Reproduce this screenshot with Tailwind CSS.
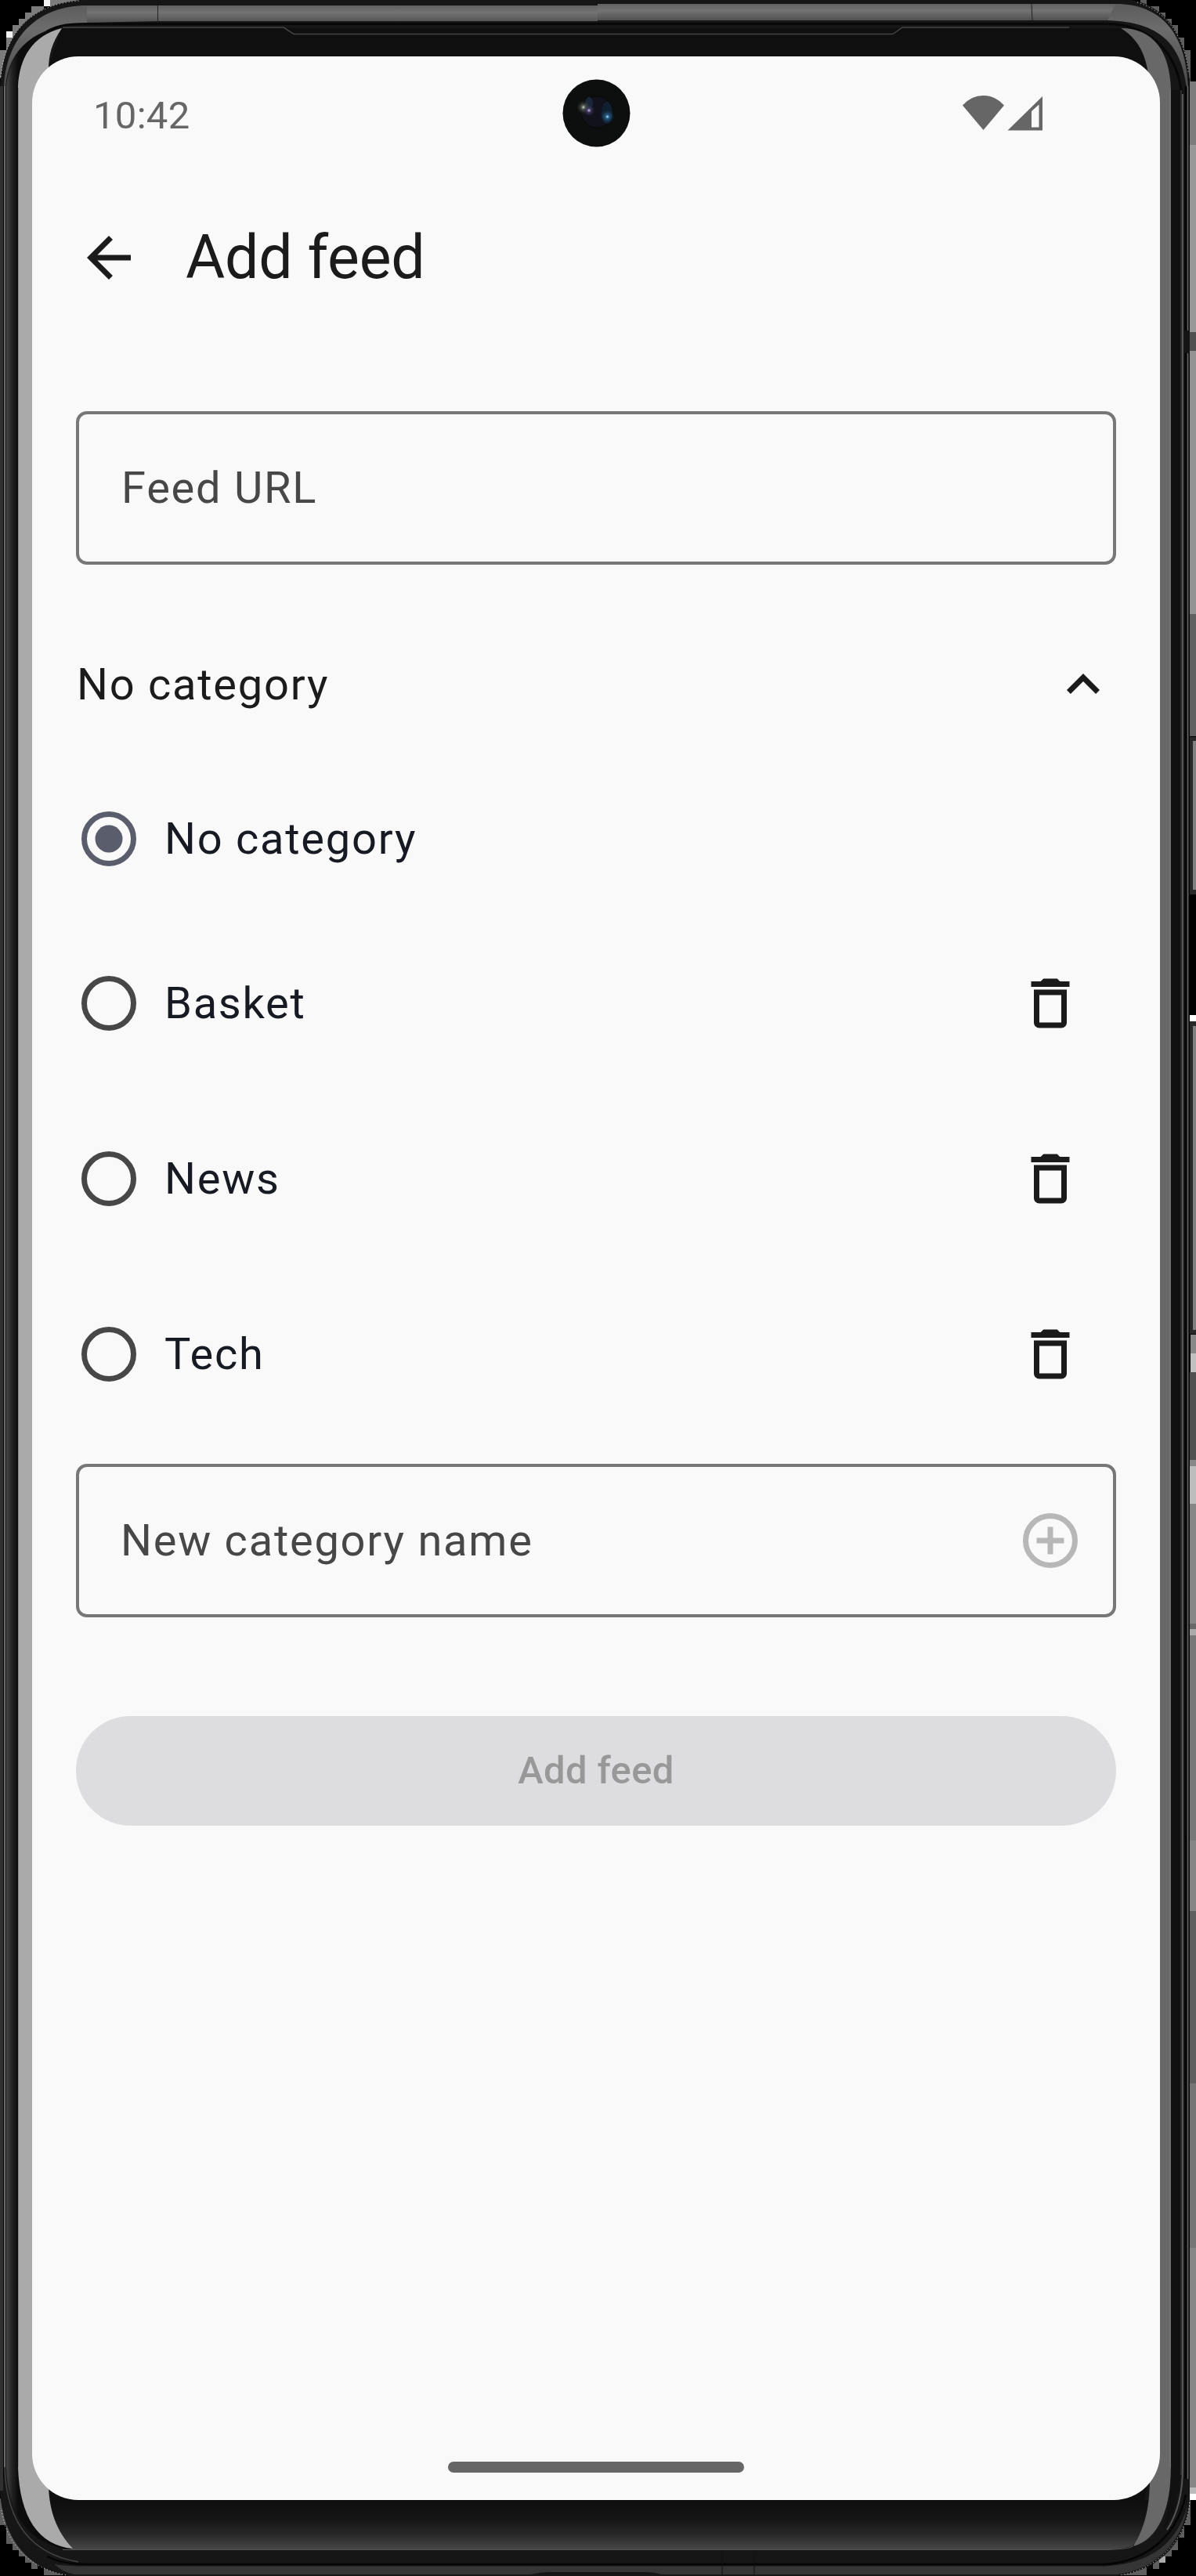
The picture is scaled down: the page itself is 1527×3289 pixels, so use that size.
<!DOCTYPE html>
<html lang="en">
<head>
<meta charset="utf-8">
<title>Add feed</title>
<script src="https://cdn.jsdelivr.net/npm/@tailwindcss/browser@4"></script>
</head>
<body class="bg-black">
<div class="relative w-[1527px] h-[3289px] overflow-hidden bg-black pt-[72px] pl-[41px] font-[Roboto,sans-serif]">

  <!-- Device frame -->
  <svg class="absolute inset-0" width="1527" height="3289" viewBox="0 0 1527 3289" fill="none">
    <defs>
      <linearGradient id="rim" x1="0" y1="0" x2="0" y2="1"><stop offset="0" stop-color="#606060"/><stop offset=".4" stop-color="#737373"/><stop offset="1" stop-color="#505050"/></linearGradient>
      <linearGradient id="corner" gradientUnits="userSpaceOnUse" x1="0" y1="5" x2="0" y2="110"><stop offset="0" stop-color="#5c5c5c"/><stop offset=".3" stop-color="#6c6c6c"/><stop offset="1" stop-color="#4a4a4a"/></linearGradient>
      <linearGradient id="left" gradientUnits="userSpaceOnUse" x1="7" y1="0" x2="23" y2="0"><stop offset="0" stop-color="#4c4c4c"/><stop offset=".5" stop-color="#242424"/><stop offset="1" stop-color="#0c0c0c"/></linearGradient>
      <linearGradient id="chin" x1="0" y1="0" x2="0" y2="1"><stop offset="0" stop-color="#0e0e0e"/><stop offset=".4" stop-color="#161616"/><stop offset=".7" stop-color="#292929"/><stop offset="1" stop-color="#484848"/></linearGradient>
      <linearGradient id="button" x1="0" y1="0" x2="1" y2="0"><stop offset="0" stop-color="#2a2a2a"/><stop offset=".45" stop-color="#282828"/><stop offset=".7" stop-color="#888"/><stop offset="1" stop-color="#505050"/></linearGradient>
    </defs>
    <!-- stepped shadow outside the corners -->
    <g fill="#7c7c7c" shape-rendering="crispEdges">
      <path d="M0 64h8v36H0zM8 48h8v24H8zM16 32h8v24h-8zM24 24h8v16h-8zM32 16h8v16h-8zM40 8h16v16H40zM56 0h44v8H56z"/>
      <path d="M8 40h8v8H8zM56 0h8v8h-8z" fill="#f2f2f2"/>
      <path d="M1456 0h8v8h-8zM1464 8h16v16h-16zM1480 16h8v16h-8zM1488 24h8v16h-8zM1496 32h8v16h-8zM1504 48h8v24h-8zM1512 64h8v45h-8z" fill="#5e5e5e"/>
      <path d="M0 3190h8v34H0zM8 3224h8v24H8zM16 3240h8v16h-8zM24 3248h8v16h-8zM32 3256h8v16h-8zM40 3264h8v16h-8zM56 3272h24v16H56z" fill="#5e5e5e"/>
      <path d="M1512 3192h8v32h-8zM1504 3216h8v24h-8zM1496 3232h8v24h-8zM1480 3248h16v16h-16zM1472 3264h8v16h-8zM1448 3272h16v16h-16zM1432 3280h16v8h-16z" fill="#5e5e5e"/>
      <path d="M1480 3264h8v8h-8z" fill="#aaa"/>
    </g>
    <!-- strip beside the phone -->
    <g shape-rendering="crispEdges">
      <path d="M1519 104h8v81h-8z" fill="#7c7c7c"/><path d="M1519 185h8v239h-8z" fill="#989898"/>
      <path d="M1519 424h8v24h-8z" fill="#505050"/><path d="M1519 448h8v336h-8z" fill="#939393"/>
      <path d="M1519 784h8v156h-8z" fill="#606060"/>
      <path d="M1519 941h8v201h-8zM1519 1304h8v399h-8z" fill="#282828"/>
      <path d="M1523 946h4v190h-4zM1523 1310h4v388h-4z" fill="#808080"/>
      <path d="M1519 1296h8v8h-8z" fill="#fff"/><path d="M1520 1704h7v24h-7z" fill="#888"/>
      <path d="M1520 1728h7v24h-7z" fill="#c0c0c0"/><path d="M1519 1752h8v112h-8z" fill="#505050"/>
      <path d="M1519 1864h8v8h-8z" fill="#888"/><path d="M1519 1872h8v48h-8z" fill="#bdbdbd"/>
      <path d="M1519 1920h8v153h-8z" fill="#868686"/><path d="M1519 2073h8v7h-8z" fill="#686868"/>
      <path d="M1519 2080h8v8h-8z" fill="#aaa"/><path d="M1519 2088h8v262h-8z" fill="#787878"/>
      <path d="M1519 2350h8v90h-8z" fill="#858585"/><path d="M1519 2440h8v220h-8z" fill="#5f5f5f"/>
      <path d="M1519 2660h8v210h-8z" fill="#757575"/><path d="M1519 2870h8v306h-8z" fill="#868686"/>
      <path d="M1519 3176h8v8h-8z" fill="#bbb"/><path d="M1519 3184h8v8h-8z" fill="#fff"/>
    </g>
    <!-- body -->
    <path d="M0 110C4 45 35 5 105 0H1445C1490 8 1518 50 1519 110V3190C1517 3240 1485 3282 1425 3289H90C40 3283 3 3245 0 3180Z" fill="#161616"/>
    <path d="M1 98C6 45 38 5 102 1M1452 3C1490 14 1514 50 1517 92M2 3205C8 3250 40 3280 85 3288M1519 3195C1515 3240 1480 3280 1430 3288" stroke="#ddd" stroke-width="1" stroke-dasharray="1 3"/>
    <path d="M110 7H763V27H201L110 29Z" fill="url(#rim)"/>
    <path d="M763 5H1425V26H763Z" fill="url(#rim)"/>
    <path d="M111 7C50 7 9 45 5 110V3150H7V112C10 62 45 32 111 29Z" fill="url(#corner)"/>
    <path d="M1424 5C1485 5 1514 45 1517 110L1515 112C1508 55 1480 28 1414 26Z" fill="url(#corner)"/>
    <path d="M201.500 7V29M1317 5L1318 26" stroke="#222"/>
    <path d="M60 40C75 32 90 30.500 110 30.500H1415C1460 31 1505 60 1509 125" stroke="#080808" stroke-width="3"/>
    <path d="M0 110H4V3180H0Z" fill="#303030"/>
    <path d="M4.500 110V3165" stroke="#050505"/>
    <path d="M6 110V3150" stroke="#777" stroke-width="1.500"/>
    <path d="M6 3150C8 3215 35 3260 100 3271" stroke="#444" stroke-width="1.500"/>
    <path d="M8 112C11 70 35 43 75 36L60 60 23 120V3150C27 3205 45 3242 90 3255C40 3250 10 3215 8 3150Z" fill="url(#left)"/>
    <path d="M79 36H1431C1465 45 1470 70 1468 110V3160L1447 3253H93L60 3190V90Z" fill="#0f0f0f"/>
    <path d="M80 35H362L375 43.500H1140L1152 35H1365" stroke="#444" stroke-width="1.500"/>
    <path d="M60 3192H1470C1467 3225 1460 3240 1445 3251Q1430 3255 1405 3256H93C72 3240 62 3215 60 3192Z" fill="url(#chin)"/>
    <path d="M80 3255.500H1410C1430 3255 1440 3254 1447 3251" stroke="#555"/>
    <path d="M60 3264C80 3274 100 3274 115 3274H1410C1450 3272 1500 3250 1514 3185" stroke="#050505" stroke-width="2.500"/>
    <path d="M70 3274C80 3276 100 3276.500 110 3276.500H1410C1460 3274 1500 3255 1516 3200C1510 3245 1475 3282 1425 3287H95C85 3285 75 3280 70 3274Z" fill="#353535"/>
    <path d="M678 3287Q690 3284 705 3284H825Q835 3284 845 3287Z" fill="#141414"/>
    <path d="M922 3260V3288M963 3260V3288" stroke="#101010"/>
    <path d="M23 110C25 75 40 46 79 36C66 55 62 70 62 90V3175C63 3205 72 3232 93 3254C50 3250 25 3215 23 3150Z" fill="#aaa"/>
    <path d="M23.500 112V3150" stroke="#8a8a8a"/>
    <path d="M1431 36C1472 36 1494 65 1495 115V3150C1495 3205 1478 3243 1447 3251C1460 3230 1468 3205 1468 3165V110C1465 75 1457 52 1431 36Z" fill="#686868"/>
    <path d="M1494 115V3150" stroke="#777"/>
    <path d="M1495 115H1508V3150C1506 3190 1498 3215 1485 3230Q1495 3200 1495 3150Z" fill="#111"/>
    <path d="M1508 115V3160" stroke="#2c2c2c" stroke-width="2"/><path d="M1510 120V3150C1510 3190 1500 3215 1490 3230" stroke="#565656" stroke-width="2"/>
    <path d="M1514 110V3165" stroke="#060606" stroke-width="3"/><path d="M1516.500 110V3165" stroke="#666" stroke-width="1.500"/><path d="M1518.500 100V3165" stroke="#050505"/>
    <path d="M1512 422H1519V451H1512Z" fill="#141414"/>
  </svg>

  <!-- Screen -->
  <main class="relative flex h-[3120px] w-[1440px] flex-col rounded-[59px] bg-[#f9f9f9]">
    <header class="flex h-[150px] items-center pr-[149px] pl-[78px] text-[#666]">
      <span class="flex-1 text-[49px] leading-none tracking-[0.3px]">10:42</span>
      <svg class="mt-[-6px]" width="104" height="46" viewBox="1228 121 104 46" fill="currentColor">
        <path d="M1229 134.500Q1240 122 1255.500 122T1282 134.500L1255.500 166Z"/>
        <path fill-rule="evenodd" d="M1286.500 166.500L1331 123V166.500ZM1317 142V162.500H1326.500V133.500Z"/>
      </svg>
    </header>
    <!-- Front camera -->
    <svg class="absolute top-[29px] left-[677px]" width="87" height="87" viewBox="0 0 87 87">
      <defs>
        <radialGradient id="g1"><stop offset="0" stop-color="#dfe8dc"/><stop offset=".3" stop-color="#6d756b" stop-opacity=".7"/><stop offset="1" stop-color="#27301f" stop-opacity="0"/></radialGradient>
        <radialGradient id="g2"><stop offset="0" stop-color="#d5f0ff"/><stop offset=".25" stop-color="#2c6f9f" stop-opacity=".8"/><stop offset="1" stop-color="#123450" stop-opacity="0"/></radialGradient>
        <radialGradient id="g3"><stop offset="0" stop-color="#d8cdf5"/><stop offset=".3" stop-color="#4e4670" stop-opacity=".8"/><stop offset="1" stop-color="#1c1a30" stop-opacity="0"/></radialGradient>
      </defs>
      <circle cx="43.500" cy="43.500" r="43" fill="#0d0f0f"/>
      <circle cx="44" cy="42" r="20" fill="#12121c" stroke="#080808"/>
      <ellipse cx="57" cy="43" rx="7" ry="14" fill="#10263b" opacity=".7"/>
      <ellipse cx="34" cy="31" rx="5" ry="8" fill="#23364f" opacity=".6"/>
      <circle cx="27" cy="36" r="9" fill="url(#g1)"/>
      <circle cx="34" cy="40" r="8" fill="url(#g3)"/>
      <circle cx="57.500" cy="48" r="9" fill="url(#g2)"/>
    </svg>

    <div class="flex h-[224px] items-center pl-14 text-[#1b1b1b] mt-[-5px]">
      <svg width="84" height="84" viewBox="0 0 24 24" fill="currentColor"><path d="M20 11H7.830l5.590-5.590L12 4l-8 8 8 8 1.410-1.410L7.830 13H20v-2z"/></svg>
      <h1 class="ml-14 text-[77px] leading-none tracking-[-0.2px]">Add feed</h1>
    </div>

    <form class="mt-[84px] flex flex-col px-14 text-[56px] leading-none tracking-[1.75px]">
      <div class="flex h-[196px] items-center rounded-[14px] border-4 border-[#777] px-[54px] text-[#474747]">Feed URL</div>

      <div class="mt-[69px] flex h-[168px] items-center justify-between pl-px text-[#1b1b1b]">
        <span>No category</span>
        <svg width="84" height="84" viewBox="0 0 24 24" fill="currentColor"><path d="M12 8l-6 6 1.410 1.410L12 10.830l4.590 4.580L18 14z"/></svg>
      </div>

      <div class="mt-[15px] flex h-[196px] items-center gap-[29px] text-[#181a23]">
        <svg width="84" height="84" viewBox="0 0 24 24" class="text-[#5a5d6b]"><circle cx="12" cy="12" r="9" fill="none" stroke="currentColor" stroke-width="2"/><circle cx="12" cy="12" r="5" fill="currentColor"/></svg>
        <span>No category</span>
      </div>
      <div class="flex h-[224px] items-center gap-[29px] pr-[42px] text-[#181a23]">
        <svg width="84" height="84" viewBox="0 0 24 24" class="text-[#474747]"><circle cx="12" cy="12" r="9" fill="none" stroke="currentColor" stroke-width="2"/></svg>
        <span class="flex-1">Basket</span>
        <svg width="84" height="84" viewBox="0 0 24 24" class="text-[#1b1b1b]" fill="currentColor"><path d="M16 9v10H8V9h8m-1.500-6h-5l-1 1H5v2h14V4h-3.500l-1-1zM18 7H6v12c0 1.100.9 2 2 2h8c1.100 0 2-.9 2-2V7z"/></svg>
      </div>
      <div class="flex h-[224px] items-center gap-[29px] pr-[42px] text-[#181a23]">
        <svg width="84" height="84" viewBox="0 0 24 24" class="text-[#474747]"><circle cx="12" cy="12" r="9" fill="none" stroke="currentColor" stroke-width="2"/></svg>
        <span class="flex-1">News</span>
        <svg width="84" height="84" viewBox="0 0 24 24" class="text-[#1b1b1b]" fill="currentColor"><path d="M16 9v10H8V9h8m-1.500-6h-5l-1 1H5v2h14V4h-3.500l-1-1zM18 7H6v12c0 1.100.9 2 2 2h8c1.100 0 2-.9 2-2V7z"/></svg>
      </div>
      <div class="flex h-[224px] items-center gap-[29px] pr-[42px] text-[#181a23]">
        <svg width="84" height="84" viewBox="0 0 24 24" class="text-[#474747]"><circle cx="12" cy="12" r="9" fill="none" stroke="currentColor" stroke-width="2"/></svg>
        <span class="flex-1">Tech</span>
        <svg width="84" height="84" viewBox="0 0 24 24" class="text-[#1b1b1b]" fill="currentColor"><path d="M16 9v10H8V9h8m-1.500-6h-5l-1 1H5v2h14V4h-3.500l-1-1zM18 7H6v12c0 1.100.9 2 2 2h8c1.100 0 2-.9 2-2V7z"/></svg>
      </div>

      <div class="mt-7 flex h-[196px] items-center justify-between rounded-[14px] border-4 border-[#777] pr-[38px] pl-[53px] text-[#474747]">
        <span>New category name</span>
        <svg width="84" height="84" viewBox="0 0 24 24" class="text-[#b7b7b7]" fill="none" stroke="currentColor" stroke-width="2"><circle cx="12" cy="12" r="9"/><path d="M7 12h10M12 7v10"/></svg>
      </div>

      <button type="button" class="mt-[126px] h-[140px] rounded-full bg-[#dddddf] pb-0.5 text-[49px] leading-none font-medium tracking-[0.350px] text-[#989899]">Add feed</button>
    </form>

    <div class="mt-auto mb-[35px] h-3.5 w-[378px] self-center rounded-full bg-[#666]"></div>
  </main>
</div>
</body>
</html>
